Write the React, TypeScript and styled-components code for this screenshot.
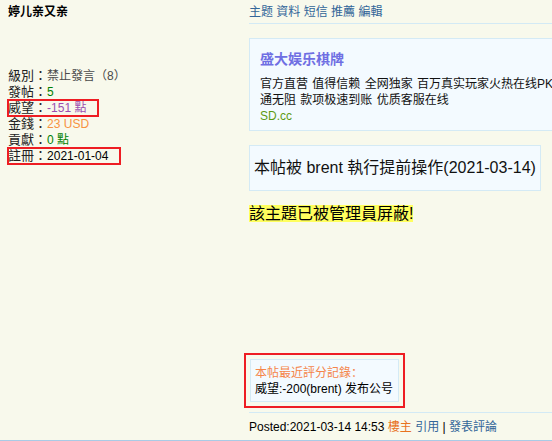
import styled, { createGlobalStyle } from 'styled-components'

const GlobalStyle = createGlobalStyle`
  html, body {
    margin: 0;
    padding: 0;
    background: #f8f9ec;
    overflow: hidden;
  }
  body {
    font-family: 'Liberation Sans', 'Noto Sans CJK SC', sans-serif;
    font-size: 12px;
    color: #000;
  }
`

type Stat = {
  label: string
  value: string
  color: string
  marked?: boolean
}

const stats: Stat[] = [
  { label: '級別', value: '禁止發言（8）', color: '#4a4a4a' },
  { label: '發帖', value: '5', color: '#008000' },
  { label: '威望', value: '-151 點', color: '#9c4fb0', marked: true },
  { label: '金錢', value: '23 USD', color: '#f7923f' },
  { label: '貢獻', value: '0 點', color: '#008000' },
  { label: '註冊', value: '2021-01-04', color: '#000000', marked: true },
]

const App = () => {
  return (
    <>
      <GlobalStyle />
      <PostRow>
        <AuthorCell>
          <Author>婷儿亲又亲</Author>
          <StatList>
            {stats.map((s) => (
              <StatLine key={s.label}>
                <StatItem $marked={s.marked}>
                  <StatLabel>{s.label}：</StatLabel>
                  <StatValue $color={s.color}>{s.value}</StatValue>
                </StatItem>
              </StatLine>
            ))}
          </StatList>
        </AuthorCell>

        <ContentCell>
          <ToolLinks>
            <a>主题</a> <a>資料</a> <a>短信</a> <a>推薦</a> <a>編輯</a>
          </ToolLinks>

          {/* advert */}
          <AdBox>
            <AdTitle>盛大娱乐棋牌</AdTitle>
            <AdText>官方直营 值得信赖 全网独家 百万真实玩家火热在线PK</AdText>
            <AdText>通无阻 款项极速到账 优质客服在线</AdText>
            <AdLink>SD.cc</AdLink>
          </AdBox>

          <NoticeBox>本帖被 brent 執行提前操作(2021-03-14)</NoticeBox>

          <BannedLine>
            <Highlight>該主題已被管理員屏蔽!</Highlight>
          </BannedLine>

          {/* rating */}
          <RateBox>
            <RateTitle>本帖最近評分記錄：</RateTitle>
            <div>威望:-200(brent) 发布公号</div>
          </RateBox>

          <PostFooter>
            Posted:2021-03-14 14:53 <Owner>樓主</Owner> <a>引用</a> | <a>發表評論</a>
          </PostFooter>
        </ContentCell>
      </PostRow>
    </>
  )
}

export default App

const PostRow = styled.div`
  display: flex;
  height: 440px;
  border-bottom: 1px solid #a9cbe6;
`

const AuthorCell = styled.div`
  width: 241px;
  flex: none;
  padding: 4px 0 0 8px;
`

const Author = styled.div`
  font-weight: bold;
  line-height: 16px;
`

const StatList = styled.div`
  margin-top: 48px;
  line-height: 16px;
  font-family: 'Liberation Sans', 'Noto Sans CJK TC', sans-serif;
  color: #222;
`

const StatLine = styled.div`
  height: 16px;
`

const StatItem = styled.span<{ $marked?: boolean }>`
  display: inline-block;
  ${(p) =>
    p.$marked &&
    `
    padding-right: 12px;
    outline: 2px solid #ee1d23;
    outline-offset: -1px;
  `}
`

const StatLabel = styled.span`
  font-size: 13px;
`

const StatValue = styled.span<{ $color: string }>`
  color: ${(p) => p.$color};
`

const ContentCell = styled.div`
  width: 330px;
  flex: none;
  display: flex;
  flex-direction: column;
  align-items: flex-start;
`

const ToolLinks = styled.div`
  align-self: stretch;
  padding: 4px 0 3px;
  line-height: 16px;
  border-bottom: 1px solid #d3eaf5;

  a {
    color: #336699;
  }
`

const AdBox = styled.div`
  align-self: stretch;
  margin-top: 14px;
  padding: 11px 10px 6px;
  background: #f3faff;
  border: 1px solid #d4eaf5;
`

const AdTitle = styled.div`
  font-size: 14px;
  font-weight: bold;
  line-height: 18px;
  color: #6f6fe3;
  margin-bottom: 8px;
`

const AdText = styled.div`
  line-height: 16px;
  white-space: nowrap;
  word-spacing: 1px;
  color: #111;
`

const AdLink = styled.div`
  line-height: 16px;
  color: #5e9a12;
`

const NoticeBox = styled.div`
  margin-top: 14px;
  padding: 12px 4px;
  font-size: 16px;
  line-height: 20px;
  color: #111;
  background: #f3faff;
  border: 1px solid #d4eaf5;
`

const BannedLine = styled.div`
  margin-top: 14px;
  font-size: 16px;
  line-height: 18px;
`

const Highlight = styled.span`
  background: #ffff5e;
`

const RateBox = styled.div`
  margin: auto 0 10px 1px;
  padding: 5px 5px 4px 4px;
  line-height: 16px;
  background: #f3faff;
  border: 1px solid #d4eaf5;
  outline: 2px solid #ee1d23;
  outline-offset: 4px;
`

const RateTitle = styled.div`
  color: #f5854a;
`

const PostFooter = styled.div`
  align-self: stretch;
  padding: 6px 0 5px;
  line-height: 16px;
  border-top: 1px solid #d3eaf5;

  a {
    color: #336699;
  }
`

const Owner = styled.span`
  color: #e8731f;
`
